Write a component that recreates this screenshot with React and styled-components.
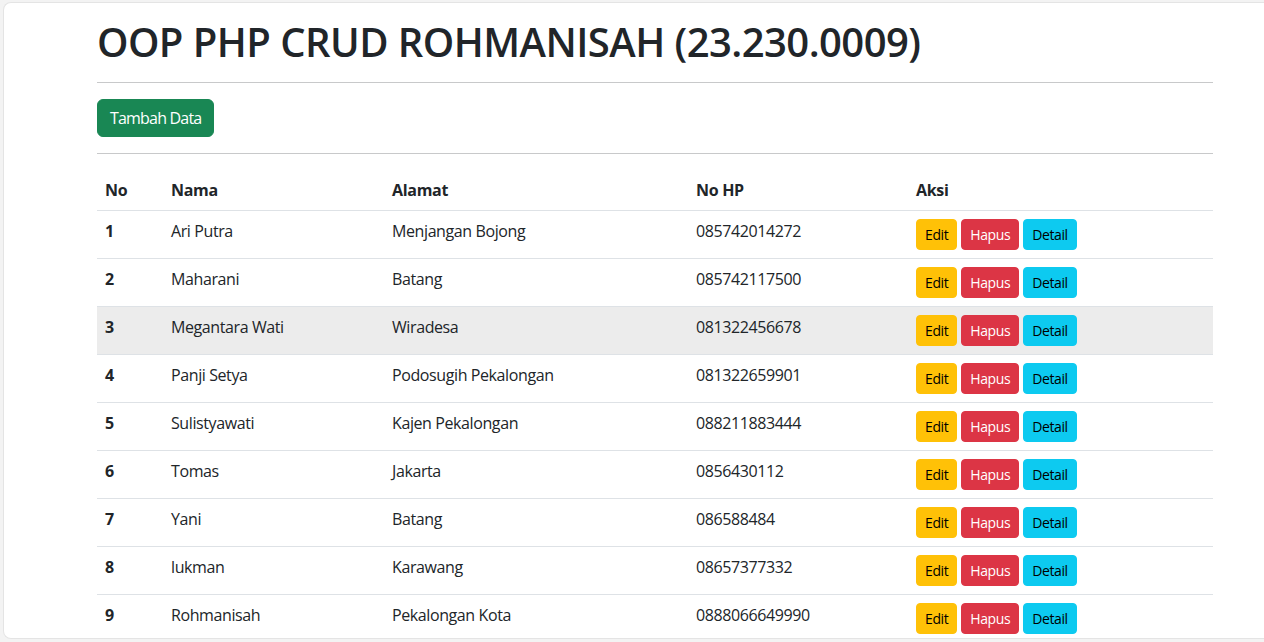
import styled, {createGlobalStyle} from 'styled-components'

const rows = [
  {no: 1, nama: 'Ari Putra', alamat: 'Menjangan Bojong', hp: '085742014272'},
  {no: 2, nama: 'Maharani', alamat: 'Batang', hp: '085742117500'},
  {no: 3, nama: 'Megantara Wati', alamat: 'Wiradesa', hp: '081322456678', hover: true},
  {no: 4, nama: 'Panji Setya', alamat: 'Podosugih Pekalongan', hp: '081322659901'},
  {no: 5, nama: 'Sulistyawati', alamat: 'Kajen Pekalongan', hp: '088211883444'},
  {no: 6, nama: 'Tomas', alamat: 'Jakarta', hp: '0856430112'},
  {no: 7, nama: 'Yani', alamat: 'Batang', hp: '086588484'},
  {no: 8, nama: 'lukman', alamat: 'Karawang', hp: '08657377332'},
  {no: 9, nama: 'Rohmanisah', alamat: 'Pekalongan Kota', hp: '0888066649990'},
]

export default function App() {
  return (
    <>
      <GlobalStyle />
      <Window>
        <Container>
          <Title>OOP PHP CRUD ROHMANISAH (23.230.0009)</Title>
          <Rule />
          <Button variant="success" size="md">Tambah Data</Button>
          <Rule />
          <Table>
            <colgroup>
              <col style={{width: 66}} />
              <col style={{width: 221}} />
              <col style={{width: 304}} />
              <col style={{width: 220}} />
              <col />
            </colgroup>
            <thead>
              <tr>
                <Th>No</Th>
                <Th>Nama</Th>
                <Th>Alamat</Th>
                <Th>No HP</Th>
                <Th>Aksi</Th>
              </tr>
            </thead>
            <tbody>
              {rows.map(r => (
                <Row key={r.no} hover={r.hover ? 1 : 0}>
                  <Th>{r.no}</Th>
                  <Td>{r.nama}</Td>
                  <Td>{r.alamat}</Td>
                  <Td>{r.hp}</Td>
                  <Td>
                    <Actions>
                      <Button variant="warning">Edit</Button>
                      <Button variant="danger">Hapus</Button>
                      <Button variant="info">Detail</Button>
                    </Actions>
                  </Td>
                </Row>
              ))}
            </tbody>
          </Table>
        </Container>
      </Window>
    </>
  )
}

const GlobalStyle = createGlobalStyle`
  html, body {
    margin: 0;
    background: #f3f3f3;
    overflow: hidden;
  }
  body {
    font-family: 'Open Sans', 'Noto Sans', sans-serif;
    color: #212529;
    font-size: 16px;
    line-height: 1.5;
  }
`

const Window = styled.div`
  margin: 2px 0 0 3px;
  height: 637px;
  background: #fff;
  border: 1px solid #e4e4e4;
  border-right: none;
  border-radius: 8px 0 0 8px;
  overflow: hidden;
  box-sizing: border-box;
`

const Container = styled.div`
  width: 1116px;
  margin-left: 93px;
  padding-top: 15px;
`

const Title = styled.h1`
  margin: 0 0 8px;
  font-size: 40px;
  font-weight: 600;
  line-height: 48px;
  letter-spacing: -0.55px;
  color: #212529;
`

const Rule = styled.hr`
  margin: 16px 0;
  border: 0;
  border-top: 1px solid #c8c9ca;
`

const colors = {
  success: {bg: '#198754', fg: '#fff'},
  warning: {bg: '#ffc107', fg: '#000'},
  danger: {bg: '#dc3545', fg: '#fff'},
  info: {bg: '#0dcaf0', fg: '#000'},
}

const Button = styled.button`
  display: inline-flex;
  align-items: center;
  justify-content: center;
  font-family: inherit;
  border: 1px solid ${p => colors[p.variant].bg};
  background: ${p => colors[p.variant].bg};
  color: ${p => colors[p.variant].fg};
  ${p =>
    p.size === 'md'
      ? `height: 38px; padding: 0 12px; font-size: 16px; border-radius: 6px; letter-spacing: -0.8px;`
      : `height: 31px; padding: 0 8px; font-size: 14px; border-radius: 4px; letter-spacing: -0.4px;`}
`

const Table = styled.table`
  width: 100%;
  border-collapse: collapse;
  table-layout: fixed;
  text-align: left;
`

const Row = styled.tr`
  background: ${p => (p.hover ? '#ececec' : 'transparent')};
`

const Th = styled.th`
  padding: 8px;
  font-weight: 700;
  vertical-align: top;
  line-height: 24px;
  border-bottom: 1px solid #dee2e6;
  letter-spacing: -0.3px;
`

const Td = styled.td`
  padding: 8px;
  vertical-align: top;
  line-height: 24px;
  border-bottom: 1px solid #dee2e6;
  letter-spacing: -0.4px;
  white-space: nowrap;
`

const Actions = styled.div`
  display: flex;
  gap: 4px;
  height: 31px;
`
